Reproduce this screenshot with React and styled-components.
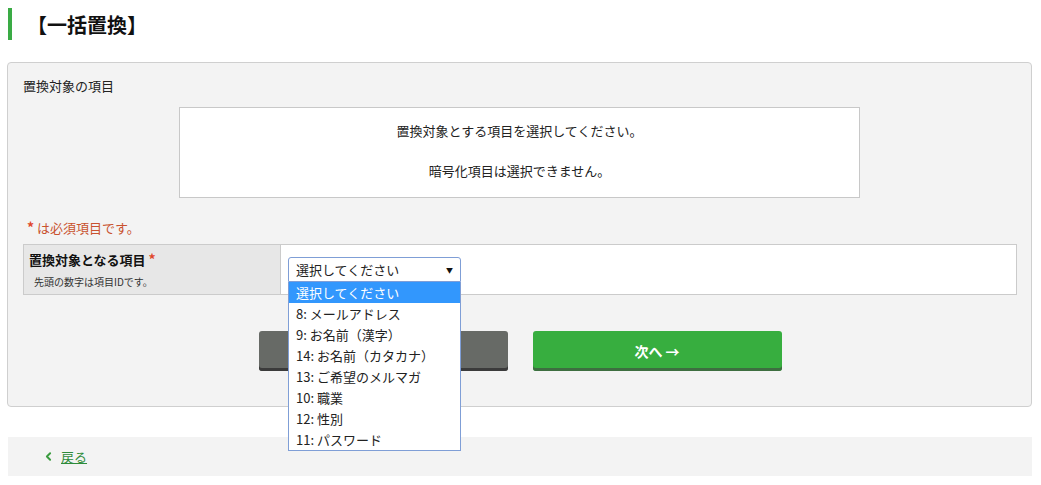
import React from 'react';
import styled, { createGlobalStyle } from 'styled-components';
import { ChevronLeft } from 'lucide-react';

const options = [
  '選択してください',
  '8: メールアドレス',
  '9: お名前（漢字）',
  '14: お名前（カタカナ）',
  '13: ご希望のメルマガ',
  '10: 職業',
  '12: 性別',
  '11: パスワード',
];

function App() {
  return (
    <>
      <GlobalStyle />
      <Page>
        <Title>【一括置換】</Title>

        <Panel>
          <SectionLabel>置換対象の項目</SectionLabel>
          <InfoBox>
            <p>置換対象とする項目を選択してください。</p>
            <p>暗号化項目は選択できません。</p>
          </InfoBox>

          <RequiredNote>
            <Star>*</Star> は必須項目です。
          </RequiredNote>

          <FormRow>
            <HeadCell>
              <HeadTitle>
                置換対象となる項目 <Star>*</Star>
              </HeadTitle>
              <HeadNote>先頭の数字は項目IDです。</HeadNote>
            </HeadCell>
            <BodyCell>
              <SelectWrap>
                <SelectBox role="combobox" aria-expanded="true">
                  <span>選択してください</span>
                  <Caret>▼</Caret>
                </SelectBox>
                <ListBox role="listbox">
                  {options.map((opt, i) => (
                    <Option key={opt} $active={i === 0}>
                      {opt}
                    </Option>
                  ))}
                </ListBox>
              </SelectWrap>
            </BodyCell>
          </FormRow>

          <Buttons>
            {/* label of this button is hidden behind the open list */}
            <Button $variant="gray" aria-label="戻る" />
            <Button $variant="green">次へ →</Button>
          </Buttons>
        </Panel>

        <Footer>
          <BackLink href="#">
            <ChevronLeft size={13} strokeWidth={3.5} color="#3a9c3f" />
            <span>戻る</span>
          </BackLink>
        </Footer>
      </Page>
    </>
  );
}

const GlobalStyle = createGlobalStyle`
  body {
    margin: 0;
    background: #fff;
    color: #222;
    font-family: "Noto Sans CJK JP", "Noto Sans", sans-serif;
  }
`;

const Page = styled.div`
  width: 1025px;
  padding: 8px 9px 10px 7px;
`;

const Title = styled.h1`
  margin: 0 0 0 1px;
  height: 32px;
  display: flex;
  align-items: center;
  padding-left: 15px;
  border-left: 4px solid #3aab45;
  font-size: 20px;
  font-weight: 700;
  color: #111;
`;

const Panel = styled.div`
  margin-top: 22px;
  background: #f3f3f3;
  border: 1px solid #cfcfcf;
  border-radius: 4px;
  padding: 14px 14px 35px 15px;
`;

const SectionLabel = styled.div`
  font-size: 13px;
  line-height: 18px;
  color: #222;
`;

const InfoBox = styled.div`
  margin: 12px 0 0 156px;
  width: 679px;
  background: #fff;
  border: 1px solid #c8c8c8;
  padding: 12px 0 15px;
  text-align: center;
  font-size: 13px;
  line-height: 22px;
  color: #222;

  p {
    margin: 0;
  }
  p + p {
    margin-top: 18px;
  }
`;

const RequiredNote = styled.div`
  margin: 21px 0 7px 4px;
  height: 18px;
  font-size: 13px;
  line-height: 18px;
  color: #c9522f;
`;

const Star = styled.span`
  color: #e0472b;
  font-weight: 700;
  font-size: 14px;
  line-height: 1;
`;

const FormRow = styled.div`
  display: grid;
  grid-template-columns: 257px 1fr;
  border: 1px solid #cbcbcb;
  background: #fff;
  height: 49px;
`;

const HeadCell = styled.div`
  background: #e7e7e7;
  border-right: 1px solid #cbcbcb;
  padding: 5px 5px 0;
`;

const HeadTitle = styled.div`
  height: 19px;
  font-size: 13px;
  font-weight: 700;
  line-height: 19px;
  color: #111;
`;

const HeadNote = styled.div`
  margin-top: 6px;
  padding-left: 5px;
  font-size: 10px;
  line-height: 14px;
  color: #333;
`;

const BodyCell = styled.div`
  padding: 12px 7px;
`;

const SelectWrap = styled.div`
  position: relative;
  width: 173px;
`;

const SelectBox = styled.div`
  box-sizing: border-box;
  height: 25px;
  display: flex;
  align-items: center;
  justify-content: space-between;
  padding: 0 7px 0 7px;
  border: 1px solid #7f9ed6;
  border-radius: 3px 3px 0 0;
  background: #fff;
  font-size: 13px;
  color: #222;
`;

const Caret = styled.span`
  font-size: 7px;
  color: #111;
`;

const ListBox = styled.div`
  position: absolute;
  top: 100%;
  left: 0;
  width: 100%;
  box-sizing: border-box;
  border: 1px solid #7f9ed6;
  border-top: none;
  background: #fff;
  z-index: 10;
`;

const Option = styled.div`
  height: 21px;
  line-height: 21px;
  padding-left: 7px;
  font-size: 13px;
  background: ${(p) => (p.$active ? '#3297fd' : '#fff')};
  color: ${(p) => (p.$active ? '#fff' : '#222')};
`;

const Buttons = styled.div`
  display: flex;
  justify-content: center;
  gap: 25px;
  margin-top: 36px;
`;

const Button = styled.button`
  width: 249px;
  height: 40px;
  border: none;
  border-radius: 3px;
  font-family: inherit;
  font-size: 14px;
  font-weight: 700;
  color: #fff;
  background: ${(p) => (p.$variant === 'green' ? '#37ae3f' : '#676a66')};
  box-shadow: inset 0 -3px 0 ${(p) => (p.$variant === 'green' ? '#3d6e40' : '#3b3b3b')};
  cursor: pointer;
`;

const Footer = styled.div`
  margin-top: 30px;
  margin-left: 1px;
  height: 39px;
  background: #f3f3f3;
  display: flex;
  align-items: center;
  padding-left: 34px;
`;

const BackLink = styled.a`
  display: inline-flex;
  align-items: center;
  gap: 6px;
  font-size: 13px;
  color: #2e8b3a;

  span {
    text-decoration: underline;
  }
`;

export default App;
